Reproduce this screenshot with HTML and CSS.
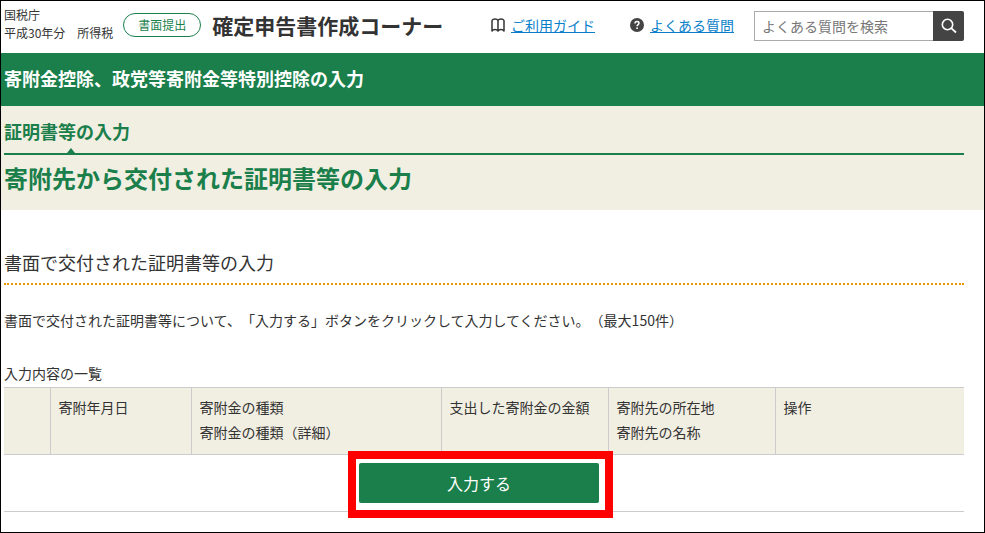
FILE: index.html
```
<!DOCTYPE html>
<html lang="ja">
<head>
    <meta charset="UTF-8">
    <meta name="viewport" content="width=device-width, initial-scale=1.0">
    <title>確定申告書作成コーナー</title>
    <link rel="stylesheet" href="styles.css">
</head>
<body>

<div class="page">
    <header class="site-header">
        <div class="agency">国税庁<br>平成30年分　所得税</div>
        <span class="badge">書面提出</span>
        <div class="site-name">確定申告書作成コーナー</div>
        <nav class="help-nav">
            <a href="#guide">
                <svg width="14" height="14" viewBox="0 0 14 14" aria-hidden="true">
                    <path d="M7 2.500C6 .5 2 .5 1 2.500V13C2.500 11 5.500 11 7 13C8.500 11 11.500 11 13 13V2.500C12 .5 8 .5 7 2.500zM7 2.500V13" fill="none" stroke="#333" stroke-width="1.500" stroke-linejoin="round"/>
                </svg>
                <span>ご利用ガイド</span>
            </a>
            <a href="#faq">
                <svg width="14" height="14" viewBox="0 0 14 14" aria-hidden="true">
                    <circle cx="7" cy="7" r="7" fill="#444"/>
                    <path d="M5 5.400C5 4.200 5.900 3.500 7 3.500s2 .7 2 1.700c0 1.400-1.900 1.400-1.900 3" fill="none" stroke="#fff" stroke-width="1.500"/>
                    <circle cx="7.100" cy="10.200" r="0.900" fill="#fff"/>
                </svg>
                <span>よくある質問</span>
            </a>
        </nav>
        <form class="search">
            <input type="text" name="q" placeholder="よくある質問を検索" aria-label="よくある質問を検索">
            <button type="submit" aria-label="検索">
                <svg width="16" height="16" viewBox="0 0 16 16" aria-hidden="true">
                    <circle cx="6.500" cy="6.500" r="5.200" fill="none" stroke="#fff" stroke-width="1.600"/>
                    <path d="M10.200 10.200L15 14.500" stroke="#fff" stroke-width="1.800"/>
                </svg>
            </button>
        </form>
    </header>

    <div class="title-bar">寄附金控除、政党等寄附金等特別控除の入力</div>

    <div class="step-area">
        <div class="step"><span>証明書等の入力</span></div>
        <h1>寄附先から交付された証明書等の入力</h1>
    </div>

    <main>
        <h2>書面で交付された証明書等の入力</h2>
        <p>書面で交付された証明書等について、「入力する」ボタンをクリックして入力してください。（最大150件）</p>

        <table>
            <caption>入力内容の一覧</caption>
            <colgroup>
                <col class="col-no">
                <col class="col-date">
                <col class="col-type">
                <col class="col-amount">
                <col class="col-place">
                <col>
            </colgroup>
            <thead>
                <tr>
                    <th></th>
                    <th>寄附年月日</th>
                    <th>寄附金の種類<br>寄附金の種類（詳細）</th>
                    <th>支出した寄附金の金額</th>
                    <th>寄附先の所在地<br>寄附先の名称</th>
                    <th>操作</th>
                </tr>
            </thead>
            <tbody>
                <tr>
                    <td colspan="6">
                        <div class="highlight">
                            <button type="button" class="btn-input">入力する</button>
                        </div>
                    </td>
                </tr>
            </tbody>
        </table>
    </main>
</div>

</body>
</html>
```
FILE: styles.css
```
* {
    box-sizing: border-box;
}

body {
    margin: 0;
    font-family: "Noto Sans CJK JP", sans-serif;
    font-size: 14px;
    line-height: 25px;
    text-spacing-trim: space-all;
    color: #333;
    background-color: #fff;
}

.page {
    min-height: 100vh;
    border: 1px solid #000;
}

/* ヘッダー */
.site-header {
    display: flex;
    align-items: center;
    padding: 5px 20px 11px 3px;
}

.agency {
    font-size: 12px;
    line-height: 18px;
    white-space: nowrap;
}

.badge {
    margin-top: 2px;
    margin-left: 10px;
    padding: 0 14px;
    border: 1px solid #1a7f4b;
    border-radius: 12px;
    color: #1a7f4b;
    font-size: 12px;
    line-height: 22px;
    white-space: nowrap;
}

.site-name {
    margin-top: 2px;
    margin-left: 11px;
    font-size: 21px;
    font-weight: bold;
    white-space: nowrap;
}

.help-nav {
    display: flex;
    gap: 35px;
    margin-top: 2px;
    margin-left: auto;
}

.help-nav a {
    display: flex;
    align-items: center;
    gap: 6px;
    color: #0a7fc9;
    text-decoration: none;
    white-space: nowrap;
}

.help-nav span {
    text-decoration: underline;
}

.search {
    display: flex;
    width: 210px;
    height: 30px;
    margin-top: 4px;
    margin-left: 20px;
}

.search input {
    flex: 1;
    min-width: 0;
    padding: 0 7px;
    border: 1px solid #aaa;
    border-right: none;
    font-family: inherit;
    font-size: 14px;
}

.search input::placeholder {
    color: #777;
}

.search button {
    display: flex;
    align-items: center;
    justify-content: center;
    width: 31px;
    padding: 0;
    border: none;
    border-radius: 0 2px 2px 0;
    background-color: #444;
    cursor: pointer;
}

/* タイトル */
.title-bar {
    padding: 12px 3px 14px;
    background-color: #1a7f4b;
    color: #fff;
    font-size: 18px;
    font-weight: bold;
    line-height: 27px;
}

.step-area {
    padding: 12px 20px 14px 3px;
    background-color: #f1eee2;
    color: #1a7f4b;
    font-weight: bold;
}

.step {
    padding-bottom: 8px;
    border-bottom: 2px solid #1a7f4b;
    font-size: 18px;
    line-height: 27px;
}

.step span {
    position: relative;
    display: inline-block;
}

.step span::after {
    content: "";
    position: absolute;
    left: 50%;
    bottom: -8px;
    border: 4px solid transparent;
    border-top: none;
    border-bottom: 5px solid #1a7f4b;
}

h1 {
    margin: 5px 0 0;
    font-size: 24px;
    line-height: 36px;
}

/* 本文 */
main {
    padding: 39px 20px 20px 3px;
}

h2 {
    margin: 0;
    padding-bottom: 7px;
    border-bottom: 2px dotted #e69500;
    font-size: 18px;
    font-weight: normal;
    line-height: 27px;
}

p {
    margin: 23px 0 28px;
}

table {
    width: 100%;
    border-collapse: collapse;
    table-layout: fixed;
}

caption {
    padding-bottom: 1px;
    text-align: left;
}

.col-no {
    width: 46px;
}

.col-date {
    width: 141px;
}

.col-type {
    width: 250px;
}

.col-amount,
.col-place {
    width: 167px;
}

th,
td {
    padding: 8px;
    border-top: 1px solid #ccc;
    border-bottom: 1px solid #ccc;
}

th {
    padding: 7px 8px 9px;
    background-color: #f1eee2;
    font-weight: normal;
    text-align: left;
    vertical-align: top;
}

th + th {
    border-left: 1px solid #ccc;
}

td {
    padding-right: 18px;
}

.highlight {
    position: relative;
    width: 240px;
    margin: 0 auto;
}

.highlight::after {
    content: "";
    position: absolute;
    inset: -12px -14px -15px -11px;
    border: 8px solid #f00;
    pointer-events: none;
}

.btn-input {
    display: block;
    width: 100%;
    height: 40px;
    border: none;
    border-radius: 2px;
    background-color: #1a7f4b;
    color: #fff;
    font-family: inherit;
    font-size: 16px;
    cursor: pointer;
}

.btn-input:hover {
    background-color: #14663c;
}
```
